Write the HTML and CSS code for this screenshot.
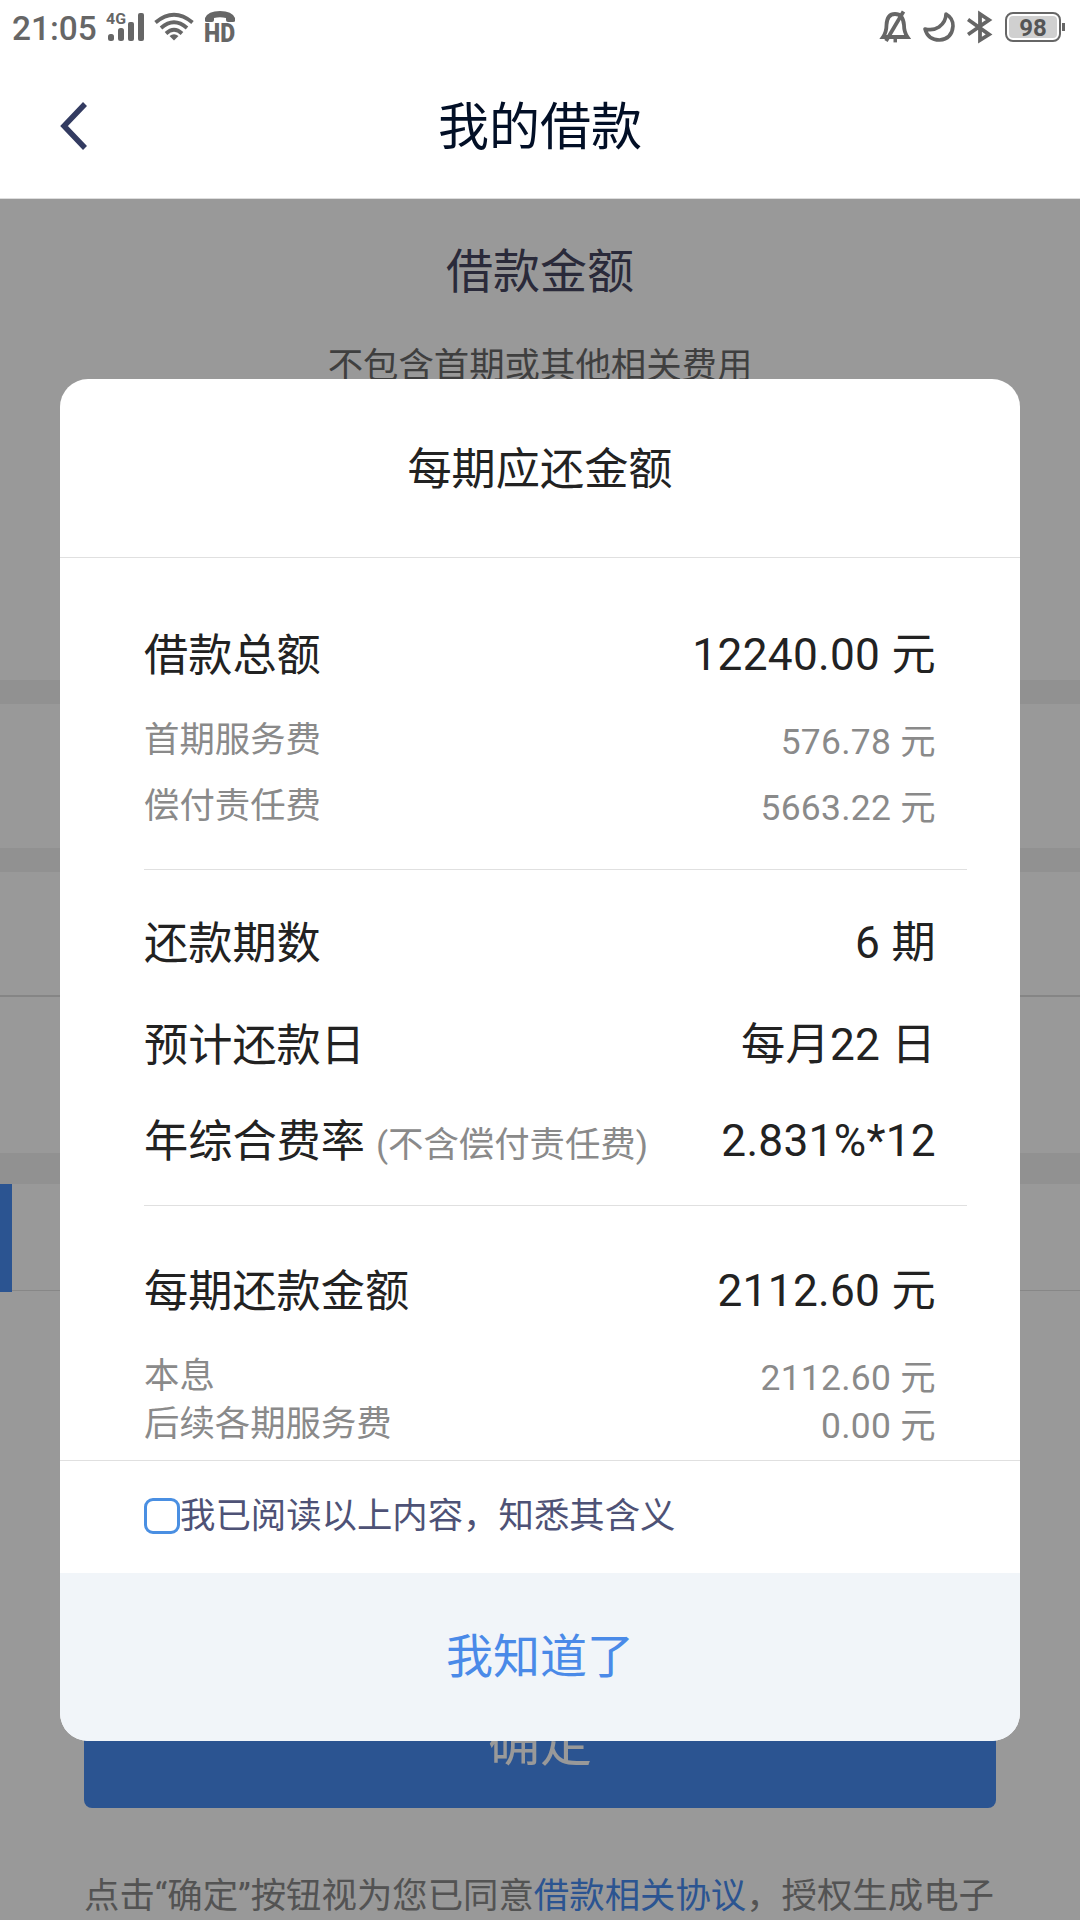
FILE: index.html
```html
<!DOCTYPE html>
<html lang="zh-CN">
<head>
    <meta charset="UTF-8">
    <meta name="viewport" content="width=device-width, initial-scale=1.0">
    <title>我的借款</title>
    <link rel="stylesheet" href="styles.css">
</head>
<body>
    <div class="screen">
        <header class="top">
            <div class="status-bar">
                <div class="status-left">
                    <span class="time">21:05</span>
                    <svg class="signal" width="39" height="32" viewBox="0 0 39 32" fill="#666">
                        <text x="0" y="13" font-size="15" font-weight="700" textLength="20" lengthAdjust="spacingAndGlyphs">4G</text>
                        <rect x="2" y="23" width="6" height="7" rx="2.5"/>
                        <rect x="12" y="17" width="6" height="13" rx="2.5"/>
                        <rect x="22" y="11" width="6" height="19" rx="2"/>
                        <rect x="32" y="2" width="6" height="28" rx="2"/>
                    </svg>
                    <svg class="wifi" width="40" height="30" viewBox="0 0 40 30" fill="none" stroke="#666" stroke-width="3.8">
                        <path d="M1.500 10.500Q20 -5 38.500 10.500"/>
                        <path d="M7 16Q20 4.500 33 16"/>
                        <path d="M12 21.500Q20 14 28 21.500"/>
                        <path d="M15.500 24Q20 20.500 24.500 24L20 28.500Z" fill="#666" stroke="none"/>
                    </svg>
                    <svg class="hd" width="32" height="54" viewBox="0 0 32 54" fill="#666">
                        <path d="M1 21V18Q4 11 16 11T31 18V21Q31 22 29 22H24Q22 22 22 20V18Q16 16.500 10 18V20Q10 22 8 22H3Q1 22 1 21Z"/>
                        <text x="0" y="42" font-size="26" font-weight="900" textLength="31" lengthAdjust="spacingAndGlyphs">HD</text>
                    </svg>
                </div>
                <div class="status-right">
                    <svg width="32" height="34" viewBox="0 0 32 34" fill="none" stroke="#666" stroke-width="3.800">
                        <path d="M4 27Q7.500 22 7.500 15Q8 4 16 4T25 15Q25 22 28.500 27Z"/>
                        <path d="M24.500 1.500L7 31"/>
                        <path d="M14.500 30.500H18"/>
                    </svg>
                    <svg width="34" height="34" viewBox="0 0 34 34" fill="none" stroke="#666" stroke-width="3.600" stroke-linejoin="round">
                        <path d="M24 4Q31 8 31 16Q30 29 17.500 30Q6 30 3 19Q11 21 17 17Q24 12 24 4Z"/>
                    </svg>
                    <svg width="27" height="34" viewBox="0 0 27 34" fill="none" stroke="#666" stroke-width="3.800">
                        <path d="M1 9.500L22 24.500L13 30V4L22 10L1 24.500"/>
                    </svg>
                    <div class="battery"><span>98</span></div>
                </div>
            </div>
            <div class="nav-bar">
                <svg class="back" width="28" height="50" viewBox="0 0 28 50" fill="none" stroke="#333b61" stroke-width="5.500">
                    <path d="M25 3L4 25L25 47"/>
                </svg>
                <h1>我的借款</h1>
            </div>
        </header>

        <main class="page">
            <section class="amount">
                <h2>借款金额</h2>
                <p>不包含首期或其他相关费用</p>
            </section>
            <section class="cell cell-a"></section>
            <section class="cell cell-b"></section>
            <section class="cell cell-c"></section>
            <section class="tabs"><i class="tab-mark"></i></section>
            <button class="submit">确定</button>
            <p class="agree">点击“确定”按钮视为您已同意<a>借款相关协议</a>，授权生成电子</p>
        </main>

        <div class="mask">
            <div class="dialog">
                <h3 class="dialog-title">每期应还金额</h3>
                <div class="dialog-body">
                    <div class="group group-total">
                        <div class="row"><span>借款总额</span><span class="val">12240.00 元</span></div>
                        <div class="row sub"><span>首期服务费</span><span class="val">576.78 元</span></div>
                        <div class="row sub"><span>偿付责任费</span><span class="val">5663.22 元</span></div>
                    </div>
                    <div class="group group-term">
                        <div class="row"><span>还款期数</span><span class="val">6 期</span></div>
                        <div class="row"><span>预计还款日</span><span class="val">每月22 日</span></div>
                        <div class="row"><span>年综合费率 <small>(不含偿付责任费)</small></span><span class="val">2.831%*12</span></div>
                    </div>
                    <div class="group group-each">
                        <div class="row"><span>每期还款金额</span><span class="val">2112.60 元</span></div>
                        <div class="row sub"><span>本息</span><span class="val">2112.60 元</span></div>
                        <div class="row sub"><span>后续各期服务费</span><span class="val">0.00 元</span></div>
                    </div>
                </div>
                <label class="read"><i class="checkbox"></i><span>我已阅读以上内容，知悉其含义</span></label>
                <button class="ok">我知道了</button>
            </div>
        </div>
    </div>
</body>
</html>
```

FILE: styles.css
```css
* {
    box-sizing: border-box;
    margin: 0;
    padding: 0;
}
body {
    font-family: Roboto, "Noto Sans CJK SC", sans-serif;
    background: #fff;
}
h1, h2, h3 {
    font-weight: 400;
}
button {
    display: block;
    border: none;
    font-family: inherit;
}
.screen {
    position: relative;
    width: 1080px;
    height: 1920px;
    overflow: hidden;
}

/* status bar + title */
.top {
    height: 199px;
    background: #fff;
    border-bottom: 1px solid #ddd;
}
.status-bar {
    display: flex;
    justify-content: space-between;
    height: 54px;
    padding: 0 15px 0 12px;
    color: #666;
}
.status-left, .status-right {
    display: flex;
    align-items: center;
}
.time {
    width: 94px;
    font-size: 33.4px;
    font-weight: 500;
    line-height: 54px;
    padding-top: 3px;
}
.wifi {
    margin-left: 9px;
}
.hd {
    margin-left: 10px;
}
.status-right {
    gap: 11px;
}
.battery {
    position: relative;
    width: 56px;
    height: 30px;
    margin-right: 4px;
    padding: 2px;
    border: 2px solid #666;
    border-radius: 8px;
}
.battery span {
    display: block;
    height: 22px;
    border-radius: 4px;
    background: #d0d0d0;
    color: #555;
    font-size: 24px;
    font-weight: 700;
    line-height: 24px;
    text-align: center;
}
.battery::after {
    content: "";
    position: absolute;
    right: -6px;
    top: 9px;
    width: 3px;
    height: 8px;
    background: #666;
}
.nav-bar {
    display: flex;
    align-items: center;
    height: 144px;
    padding: 0 60px;
}
.nav-bar h1 {
    flex: 1;
    margin-right: 28px;
    padding-top: 4px;
    color: #020f26;
    font-size: 51px;
    line-height: 60px;
    text-align: center;
}

/* page below the mask */
.page {
    height: 1721px;
}
.amount {
    height: 481px;
    padding-top: 40px;
    text-align: center;
}
.amount h2 {
    color: #464662;
    font-size: 47px;
    line-height: 66px;
}
.amount p {
    margin-top: 36px;
    color: #6a6a6a;
    font-size: 35.4px;
    line-height: 50px;
}
.cell {
    border-top: 24px solid #f2f2f2;
}
.cell-a {
    height: 168px;
}
.cell-b {
    height: 149px;
    border-bottom: 2px solid #dedede;
}
.cell-c {
    height: 187px;
    border-top: none;
    border-bottom: 31px solid #f2f2f2;
}
.tabs {
    height: 107px;
    border-bottom: 1px solid #e2e2e2;
}
.tab-mark {
    display: block;
    width: 12px;
    height: 108px;
    background: #488cf2;
}
.submit {
    width: 912px;
    height: 128px;
    margin: 389px 84px 0;
    border-radius: 8px;
    background: #488cf2;
    color: #fff;
    font-size: 52px;
    line-height: 126px;
}
.agree {
    margin: 63px 0 0 84px;
    color: #8a8a8a;
    font-size: 35.4px;
    line-height: 50px;
    white-space: nowrap;
}
.agree a {
    color: #488cf2;
}

/* dialog */
.mask {
    position: absolute;
    top: 199px;
    left: 0;
    width: 1080px;
    height: 1721px;
    padding: 180px 60px 0;
    background: rgba(0, 0, 0, 0.4);
}
.dialog {
    height: 1362px;
    border-radius: 28px;
    background: #fff;
    overflow: hidden;
}
.dialog-title {
    height: 179px;
    border-bottom: 1px solid #e0e0e0;
    color: #222;
    font-size: 44.2px;
    line-height: 183px;
    text-align: center;
}
.dialog-body {
    height: 903px;
    padding-left: 84px;
    border-bottom: 1px solid #e0e0e0;
}
.group {
    width: 823px;
    padding-right: 31px;
    border-bottom: 1px solid #e0e0e0;
}
.group:last-child {
    border-bottom: none;
}
.row {
    display: flex;
    justify-content: space-between;
    height: 60px;
    color: #222;
    font-size: 44.2px;
    line-height: 60px;
    white-space: nowrap;
}
.row span {
    padding-top: 1px;
}
.row .val {
    padding-top: 0;
    letter-spacing: 0.3px;
}
.row small {
    color: #8a8a8a;
    font-size: 35.4px;
}
.sub {
    height: 50px;
    color: #8a8a8a;
    font-size: 35.4px;
    line-height: 50px;
}
.sub .val {
    padding-top: 3px;
}
.group-total {
    height: 312px;
    padding-top: 67px;
}
.group-total .sub {
    margin-top: 29px;
}
.group-total .sub + .sub {
    margin-top: 16px;
}
.group-term {
    height: 336px;
    padding-top: 43px;
}
.group-term .row + .row {
    margin-top: 42px;
}
.group-term .row:last-child {
    margin-top: 36px;
}
.group-each {
    padding-top: 55px;
}
.group-each .sub {
    margin-top: 29px;
}
.group-each .sub + .sub {
    margin-top: -2px;
}
.read {
    display: flex;
    align-items: center;
    height: 112px;
    padding: 0 0 2px 84px;
    color: #4e5276;
    font-size: 35.4px;
    line-height: 50px;
}
.checkbox {
    width: 36px;
    height: 36px;
    border: 3px solid #4a8fe2;
    border-radius: 9px;
}
.ok {
    width: 100%;
    height: 168px;
    background: #f1f5f9;
    color: #4a8ae8;
    font-size: 47px;
    line-height: 168px;
}
```
